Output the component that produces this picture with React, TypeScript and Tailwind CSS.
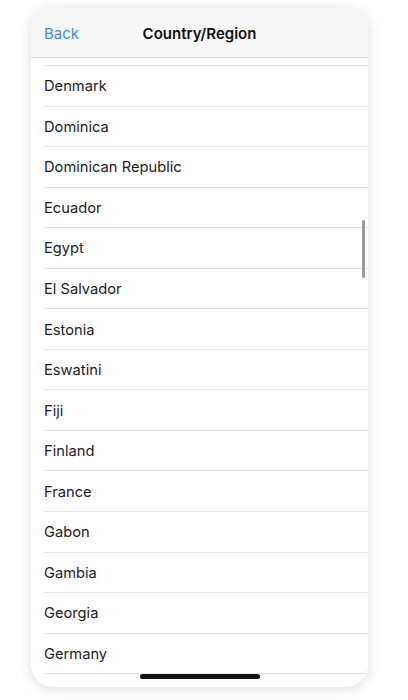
import React from 'react';

const countries = [
  'Denmark',
  'Dominica',
  'Dominican Republic',
  'Ecuador',
  'Egypt',
  'El Salvador',
  'Estonia',
  'Eswatini',
  'Fiji',
  'Finland',
  'France',
  'Gabon',
  'Gambia',
  'Georgia',
  'Germany',
];

export default function App() {
  return (
    <div className="w-[408px] h-[700px] bg-white pt-[8px] pl-[31px] font-['Inter',sans-serif]">
      <div className="relative w-[337px] h-[679px] rounded-[22px] bg-white overflow-hidden shadow-[0_2px_14px_rgba(0,0,0,0.14)] flex flex-col">
        {/* nav bar */}
        <div className="relative h-[50px] shrink-0 bg-[#f7f7f7] border-b border-[#dcdcdc] flex items-center px-[13px] pt-[4px]">
          <button className="text-[15px] text-[#3a8ee6]">Back</button>
          <div className="absolute inset-0 pt-[4px] flex items-center justify-center pointer-events-none">
            <span className="text-[15px] font-semibold text-[#111]">Country/Region</span>
          </div>
        </div>

        {/* list */}
        <div className="flex-1 overflow-hidden pt-[7px]">
          <div className="ml-[13px] border-t border-[#e4e4e4]" />
          {countries.map((c) => (
            <div key={c} className="ml-[13px] h-[40.55px] border-b border-[#e4e4e4] flex items-center pt-[1px]">
              <span className="text-[14.7px] text-[#1c1c1e]">{c}</span>
            </div>
          ))}
        </div>

        {/* scroll indicator */}
        <div className="absolute right-[3px] top-[212px] w-[3px] h-[58px] rounded-full bg-[#9a9a9a]" />

        {/* home indicator */}
        <div className="absolute bottom-[8px] left-[109px] w-[120px] h-[5px] rounded-full bg-[#111]" />
      </div>
    </div>
  );
}
